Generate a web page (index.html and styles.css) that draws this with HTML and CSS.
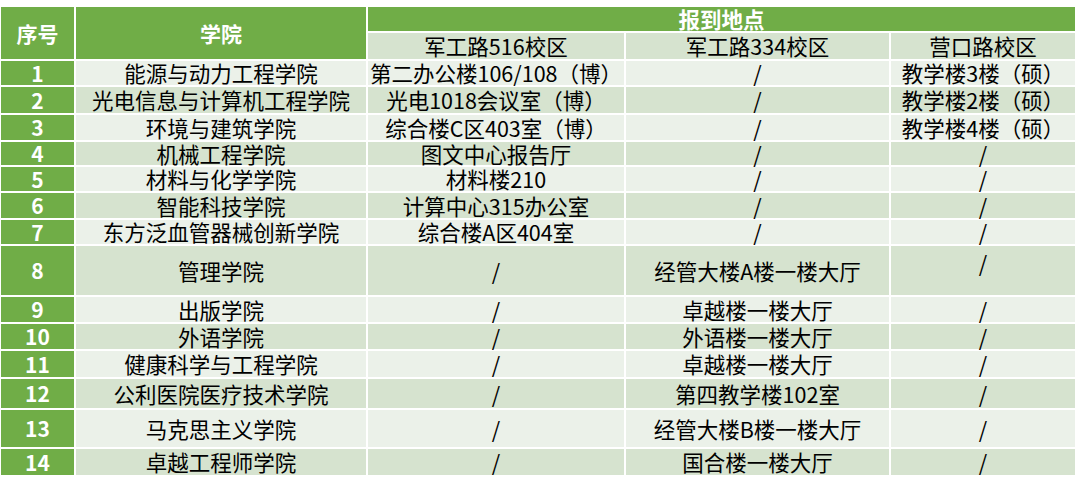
FILE: index.html
```html
<!DOCTYPE html>
<html lang="zh-CN">
<head>
<meta charset="utf-8">
<title>报到地点</title>
<link rel="stylesheet" href="styles.css">
</head>
<body>
<div class="sheet">
  <div class="h span-rows">序号</div>
  <div class="h span-rows">学院</div>
  <div class="h span-cols">报到地点</div>
  <div class="sub">军工路516校区</div>
  <div class="sub">军工路334校区</div>
  <div class="sub">营口路校区</div>

  <div class="row light"><div class="num">1</div><div class="c">能源与动力工程学院</div><div class="c">第二办公楼106/108（博）</div><div class="c">/</div><div class="c">教学楼3楼（硕）</div></div>
  <div class="row dark"><div class="num">2</div><div class="c">光电信息与计算机工程学院</div><div class="c">光电1018会议室（博）</div><div class="c">/</div><div class="c">教学楼2楼（硕）</div></div>
  <div class="row light"><div class="num">3</div><div class="c">环境与建筑学院</div><div class="c">综合楼C区403室（博）</div><div class="c">/</div><div class="c">教学楼4楼（硕）</div></div>
  <div class="row dark"><div class="num">4</div><div class="c">机械工程学院</div><div class="c">图文中心报告厅</div><div class="c">/</div><div class="c">/</div></div>
  <div class="row light"><div class="num">5</div><div class="c">材料与化学学院</div><div class="c">材料楼210</div><div class="c">/</div><div class="c">/</div></div>
  <div class="row dark"><div class="num">6</div><div class="c">智能科技学院</div><div class="c">计算中心315办公室</div><div class="c">/</div><div class="c">/</div></div>
  <div class="row light"><div class="num">7</div><div class="c">东方泛血管器械创新学院</div><div class="c">综合楼A区404室</div><div class="c">/</div><div class="c">/</div></div>
  <div class="row dark"><div class="num">8</div><div class="c">管理学院</div><div class="c">/</div><div class="c">经管大楼A楼一楼大厅</div><div class="c top">/</div></div>
  <div class="row light"><div class="num">9</div><div class="c">出版学院</div><div class="c">/</div><div class="c">卓越楼一楼大厅</div><div class="c">/</div></div>
  <div class="row dark"><div class="num">10</div><div class="c">外语学院</div><div class="c">/</div><div class="c">外语楼一楼大厅</div><div class="c">/</div></div>
  <div class="row light"><div class="num">11</div><div class="c">健康科学与工程学院</div><div class="c">/</div><div class="c">卓越楼一楼大厅</div><div class="c">/</div></div>
  <div class="row dark"><div class="num">12</div><div class="c">公利医院医疗技术学院</div><div class="c">/</div><div class="c">第四教学楼102室</div><div class="c">/</div></div>
  <div class="row light"><div class="num">13</div><div class="c">马克思主义学院</div><div class="c">/</div><div class="c">经管大楼B楼一楼大厅</div><div class="c">/</div></div>
  <div class="row dark"><div class="num">14</div><div class="c">卓越工程师学院</div><div class="c">/</div><div class="c">国合楼一楼大厅</div><div class="c">/</div></div>
</div>
</body>
</html>
```

FILE: styles.css
```css
html, body {
  margin: 0;
  padding: 0;
  background: #ffffff;
}

body {
  font-family: "Noto Sans CJK SC", "Noto Sans", sans-serif;
  color: #000000;
}

.sheet {
  display: grid;
  grid-template-columns: 73px 290px 256px 263px 184px;
  grid-template-rows: 24px 26px 24px 26px 25px 23px 24px 25px 24px 49px 25px 25px 26px 29px 37px 26px;
  gap: 2px;
  margin: 7px 0 0 1px;
  width: 1074px;
  background: #ffffff;
}

.row {
  display: contents;
}

.h, .sub, .num, .c {
  display: flex;
  align-items: center;
  justify-content: center;
  white-space: nowrap;
  overflow: visible;
  line-height: 1;
}

.h {
  background: #70ad47;
  color: #ffffff;
  font-weight: 700;
  font-size: 21px;
}

.span-rows {
  grid-row: span 2;
}

.span-cols {
  grid-column: span 3;
  font-size: 21.5px;
}

.sub {
  background: #d6e3cf;
  font-size: 21.5px;
}

.num {
  background: #70ad47;
  color: #ffffff;
  font-weight: 700;
  font-size: 21px;
}

.c {
  font-size: 21.5px;
}

.light .c {
  background: #ebf1e9;
}

.dark .c {
  background: #d6e3cf;
}

.c.top {
  align-items: flex-start;
  padding-top: 6px;
}
```
